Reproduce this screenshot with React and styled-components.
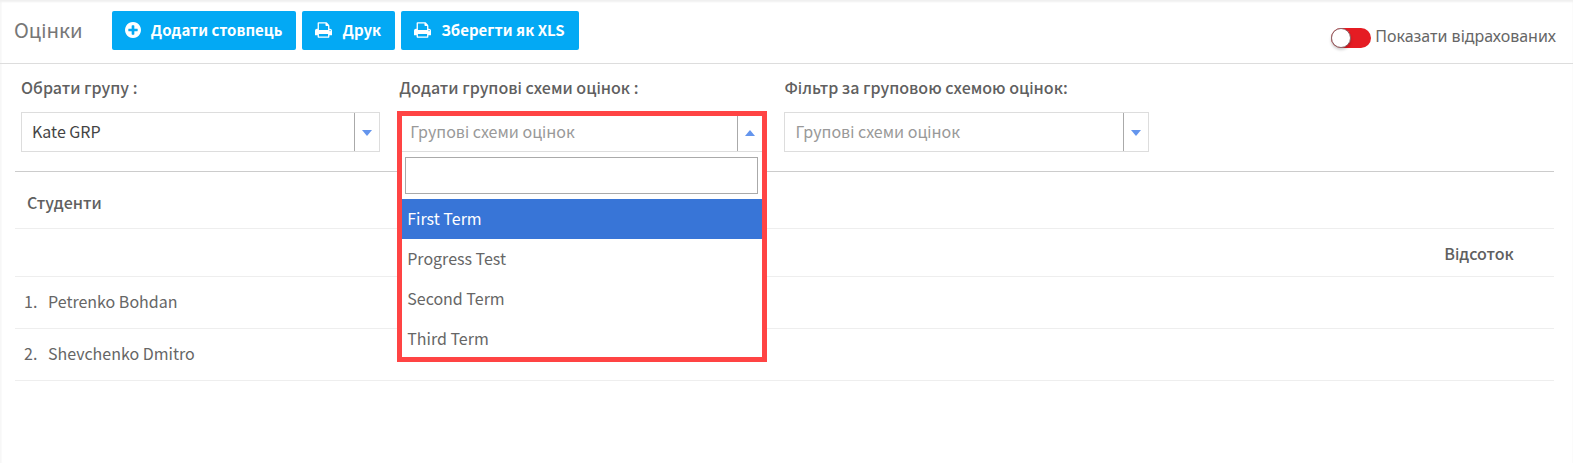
import React, { useState } from "react";
import styled, { createGlobalStyle, css } from "styled-components";

const GlobalStyle = createGlobalStyle`
  *, *::before, *::after { box-sizing: border-box; }
  body {
    margin: 0;
    background: #fff;
    color: #666;
    font: 400 16px/24px "Noto Sans CJK JP", "Noto Sans", "Open Sans", sans-serif;
  }
  button, input, select { font: inherit; }
`;

const Page = styled.div`
  min-height: 100vh;
  box-shadow: inset 0 2px 2px #f0f0f0, inset 2px 0 1px #fafafa;
`;

const Header = styled.header`
  display: flex;
  align-items: center;
  justify-content: space-between;
  min-height: 64px;
  padding: 11px 17px 13px 14px;
  border-bottom: 1px solid #ddd;
`;

const HeaderStart = styled.div`
  display: flex;
  align-items: center;
  gap: 29px;
`;

const Title = styled.h1`
  margin: 0;
  padding-bottom: 2px;
  font-size: 20px;
  line-height: 28px;
  font-weight: 400;
  color: #777;
`;

const Toolbar = styled.div`
  display: flex;
  gap: 6px;
`;

const ActionButton = styled.button`
  display: flex;
  align-items: center;
  gap: 10px;
  height: 39px;
  padding: 0 14px 2px 13px;
  border: 0;
  border-radius: 2px;
  background: #03a9f4;
  color: #fff;
  font-size: 15px;
  font-weight: 700;
  white-space: nowrap;
  cursor: pointer;
`;

const Glyph = styled.svg`
  flex: none;
  height: 16px;
  fill: currentColor;
`;

const ToggleLabel = styled.label`
  display: flex;
  align-items: flex-start;
  gap: 4px;
  padding-top: 10px;
  white-space: nowrap;
`;

const Toggle = styled.input`
  appearance: none;
  display: flex;
  justify-content: flex-start;
  width: 40px;
  height: 20px;
  margin: 4px 0 0;
  border-radius: 10px;
  background: #e51c23;
  cursor: pointer;

  &::before {
    content: "";
    width: 20px;
    height: 20px;
    border: 1px solid #8a6467;
    border-radius: 50%;
    background: #fff;
    box-shadow: 0 2px 3px rgba(0, 0, 0, 0.2);
  }
  &:checked { justify-content: flex-end; background: #4caf50; }
`;

const ToggleText = styled.span`
  font-family: "Noto Sans", "Open Sans", sans-serif;
`;

const Filters = styled.section`
  display: grid;
  grid-template-columns: 359fr 366fr 364fr 385fr;
  column-gap: 19px;
  padding: 11px 20px 19px 21px;
`;

const Field = styled.div`
  display: flex;
  flex-direction: column;
  gap: 13px;
`;

const FieldLabel = styled.label`
  font-weight: 500;
  color: #606060;
  white-space: nowrap;
`;

const SelectBox = styled.div`
  display: flex;
  align-items: stretch;
  position: relative;
  height: 40px;
  border: 1px solid #ddd;
  background: #fff;

  &::after {
    content: "";
    position: absolute;
    right: 7px;
    top: 17px;
    border: 5px solid transparent;
    border-top: 6px solid #6495ed;
    border-bottom: 0;
    pointer-events: none;
  }
  &::before {
    content: "";
    position: absolute;
    inset: 0 24px 0 auto;
    border-left: 1px solid #aaa;
    pointer-events: none;
  }
  ${(p) => p.$open && css`
    height: 36px;
    border-width: 0 0 1px;
    &::after {
      top: 14px;
      border-bottom: 6px solid #6495ed;
      border-top: 0;
    }
  `}
`;

const Select = styled.select`
  appearance: none;
  flex: 1;
  min-width: 0;
  padding: ${(p) => (p.$open ? "0 32px 5px 8px" : "0 32px 2px 10px")};
  border: 0;
  outline: 0;
  background: transparent;
  color: ${(p) => (p.$muted ? "#999" : "#444")};
`;

const OpenSlot = styled.div`
  position: relative;
  height: 40px;
`;

const OpenPanel = styled.div`
  position: absolute;
  z-index: 1;
  inset: -1px -2px auto;
  border: 5px solid #ff4444;
  background: #fff;
`;

const SearchBox = styled.div`
  display: flex;
  padding: 5px 4px 5px 3px;
`;

const Search = styled.input`
  flex: 1;
  min-width: 0;
  height: 37px;
  padding: 0 8px;
  border: 1px solid #aaa;
  background: #fff;
`;

const Options = styled.ul`
  height: 158px;
  margin: 0;
  padding: 0;
  overflow: hidden;
  list-style: none;
`;

const Option = styled.li`
  padding: 7px 5px 9px;
  background: ${(p) => (p.$active ? "#3875d7" : "transparent")};
  color: ${(p) => (p.$active ? "#fff" : "#666")};
`;

const TableArea = styled.main`
  padding: 0 19px 0 15px;
`;

const Table = styled.table`
  width: 100%;
  border-top: 1px solid #ccc;
  border-collapse: separate;
  border-spacing: 0;
`;

const HeadCell = styled.th`
  height: ${(p) => (p.$tall ? 57 : 48)}px;
  padding: ${(p) => (p.$tall ? "4px 12px 0" : "0 14px 0 12px")};
  border-bottom: 1px solid #eee;
  color: #606060;
  font-weight: 500;
  text-align: ${(p) => (p.$center ? "center" : "left")};
`;

const Cell = styled.td`
  height: 52px;
  width: ${(p) => p.$width || "auto"};
  padding: 0 0 4px ${(p) => (p.$indent ? 9 : 0)}px;
  border-bottom: 1px solid #eee;
`;

const PlusIcon = () => (
  <Glyph viewBox="0 0 1536 1536" width="16" aria-hidden="true">
    <path d="M1216 832v-128q0-26-19-45t-45-19h-256v-256q0-26-19-45t-45-19h-128q-26 0-45 19t-19 45v256h-256q-26 0-45 19t-19 45v128q0 26 19 45t45 19h256v256q0 26 19 45t45 19h128q26 0 45-19t19-45v-256h256q26 0 45-19t19-45zM1536 768q0 209-103 385.5t-279.5 279.5-385.5 103-385.5-103-279.5-279.5-103-385.5 103-385.5 279.5-279.5 385.5-103 385.5 103 279.5 279.5 103 385.5z" />
  </Glyph>
);

const PrintIcon = () => (
  <Glyph viewBox="0 0 1664 1536" width="17" aria-hidden="true">
    <path d="M384 1408h896v-256h-896v256zM384 768h896v-384h-160q-40 0-68-28t-28-68v-160h-640v640zM1536 832q0-26-19-45t-45-19-45 19-19 45 19 45 45 19 45-19 19-45zM1664 832v416q0 13-9.5 22.5t-22.5 9.5h-224v160q0 40-28 68t-68 28h-960q-40 0-68-28t-28-68v-160h-224q-13 0-22.5-9.5t-9.5-22.5v-416q0-79 56.5-135.5t135.5-56.5h64v-544q0-40 28-68t68-28h672q40 0 88 20t76 48l152 152q28 28 48 76t20 88v256h64q79 0 135.5 56.5t56.5 135.5z" />
  </Glyph>
);

const terms = ["First Term", "Progress Test", "Second Term", "Third Term"];
const students = ["Petrenko Bohdan", "Shevchenko Dmitro"];
const schemePlaceholder = "Групові схеми оцінок";

export default function App() {
  const [active, setActive] = useState(0);
  return (
    <Page>
      <GlobalStyle />
      <Header>
        <HeaderStart>
          <Title>Оцінки</Title>
          <Toolbar>
            <ActionButton type="button"><PlusIcon />Додати стовпець</ActionButton>
            <ActionButton type="button"><PrintIcon />Друк</ActionButton>
            <ActionButton type="button"><PrintIcon />Зберегти як XLS</ActionButton>
          </Toolbar>
        </HeaderStart>
        <ToggleLabel>
          <Toggle type="checkbox" />
          <ToggleText>Показати відрахованих</ToggleText>
        </ToggleLabel>
      </Header>

      <Filters>
        <Field>
          <FieldLabel htmlFor="group">Обрати групу :</FieldLabel>
          <SelectBox>
            <Select id="group"><option>Kate GRP</option></Select>
          </SelectBox>
        </Field>
        <Field>
          <FieldLabel htmlFor="add-scheme">Додати групові схеми оцінок :</FieldLabel>
          <OpenSlot>
            <OpenPanel>
              <SelectBox $open>
                <Select id="add-scheme" $muted $open><option>{schemePlaceholder}</option></Select>
              </SelectBox>
              <SearchBox><Search type="text" aria-label="Пошук" /></SearchBox>
              <Options role="listbox" aria-label={schemePlaceholder}>
                {terms.map((term, i) => (
                  <Option
                    key={term}
                    role="option"
                    aria-selected={i === active}
                    $active={i === active}
                    onMouseEnter={() => setActive(i)}
                  >
                    {term}
                  </Option>
                ))}
              </Options>
            </OpenPanel>
          </OpenSlot>
        </Field>
        <Field>
          <FieldLabel htmlFor="filter-scheme">Фільтр за груповою схемою оцінок:</FieldLabel>
          <SelectBox>
            <Select id="filter-scheme" $muted><option>{schemePlaceholder}</option></Select>
          </SelectBox>
        </Field>
      </Filters>

      <TableArea>
        <Table>
          <thead>
            <tr><HeadCell $tall colSpan={3}>Студенти</HeadCell></tr>
            <tr>
              <HeadCell colSpan={2} />
              <HeadCell $center>Відсоток</HeadCell>
            </tr>
          </thead>
          <tbody>
            {students.map((name, i) => (
              <tr key={name}>
                <Cell $width="33px" $indent>{i + 1}.</Cell>
                <Cell>{name}</Cell>
                <Cell $width="148px" />
              </tr>
            ))}
          </tbody>
        </Table>
      </TableArea>
    </Page>
  );
}
